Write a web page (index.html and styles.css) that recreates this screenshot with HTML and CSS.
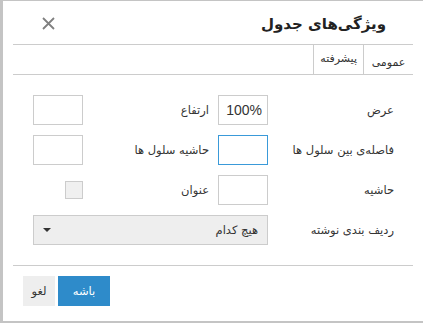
FILE: index.html
```html
<!DOCTYPE html>
<html lang="fa" dir="rtl">
  <head>
    <meta charset="UTF-8" />
    <title>ویژگی‌های جدول</title>
    <link rel="stylesheet" href="styles.css">
  </head>
  <body>
    <div class="dialog">
      <div class="head">
        <h1 class="title">ویژگی‌های جدول</h1>
        <span class="close">
          <svg width="13" height="13" viewBox="0 0 13 13">
            <path d="M1 1L12 12M12 1L1 12" stroke="#808080" stroke-width="1.8" />
          </svg>
        </span>
      </div>

      <div class="tabs">
        <span class="tab active">عمومی</span>
        <span class="tab">پیشرفته</span>
      </div>

      <div class="form">
        <label class="lbl">عرض</label>
        <input class="field" type="text" value="100%" />
        <label class="lbl lbl2">ارتفاع</label>
        <input class="field" type="text" />

        <label class="lbl">فاصله‌ی بین سلول ها</label>
        <input class="field focus" type="text" />
        <label class="lbl lbl2">حاشیه سلول ها</label>
        <input class="field" type="text" />

        <label class="lbl">حاشیه</label>
        <input class="field" type="text" />
        <label class="lbl lbl2">عنوان</label>
        <span class="check"></span>

        <label class="lbl">ردیف بندی نوشته</label>
        <div class="select">
          <span>هیچ کدام</span>
          <span class="arrow"></span>
        </div>
      </div>

      <div class="foot">
        <button class="btn ok">باشه</button>
        <button class="btn cancel">لغو</button>
      </div>
    </div>
  </body>
</html>
```

FILE: styles.css
```css
* {
  margin: 0;
  padding: 0;
  box-sizing: border-box;
}

body {
  font-family: "DejaVu Sans", "Noto Sans", sans-serif;
  font-size: 11.5px;
  color: #333;
  background: #fff;
}

.dialog {
  width: 423px;
  height: 323px;
  border-left: 3px solid #c4c4c4;
  border-top: 1px solid #c4c4c4;
  border-bottom: 2px solid #c4c4c4;
  padding: 0 10px;
}

.head {
  height: 44px;
  border-bottom: 1px solid #ccc;
  display: flex;
  align-items: center;
  justify-content: space-between;
  padding: 2px 27px 0 29px;
}

.title {
  font-size: 15px;
  font-weight: bold;
  color: #222;
}

.close {
  display: flex;
}

.tabs {
  display: flex;
  height: 30px;
  border-bottom: 1px solid #ccc;
}

.tab {
  padding: 0 6px;
  line-height: 28px;
  border-left: 1px solid #ccc;
  font-size: 11px;
}

.tab.active {
  width: 50px;
  text-align: center;
  padding-top: 4px;
}

.form {
  display: grid;
  grid-template-columns: 126px 50px 135px 50px;
  grid-auto-rows: 30px;
  row-gap: 10px;
  padding: 20px 19px 20px 0;
}

.lbl {
  align-self: center;
}

.lbl2 {
  padding-right: 9px;
}

.field {
  width: 50px;
  height: 30px;
  border: 1px solid #ccc;
  font-family: "Liberation Sans", sans-serif;
  font-size: 14px;
  color: #333;
  padding: 0 5px;
  text-align: right;
  outline: none;
}

.field.focus {
  border-color: #3a9ad9;
}

.check {
  width: 18px;
  height: 18px;
  border: 1px solid #ccc;
  background: #f0f0f0;
  align-self: center;
}

.select {
  grid-column: 2 / 5;
  height: 30px;
  border: 1px solid #ccc;
  background: #eee;
  display: flex;
  align-items: center;
  justify-content: space-between;
  padding: 0 9px 0 9px;
}

.arrow {
  width: 0;
  height: 0;
  border-left: 4px solid transparent;
  border-right: 4px solid transparent;
  border-top: 4px solid #333;
}

.foot {
  border-top: 1px solid #ccc;
  padding: 10px 10px 0;
  display: flex;
  justify-content: flex-end;
  gap: 3px;
}

.btn {
  height: 30px;
  border: none;
  font-family: "DejaVu Sans", sans-serif;
  font-size: 11.5px;
}

.ok {
  width: 52px;
  background: #2e8bca;
  color: #fff;
}

.cancel {
  width: 32px;
  background: #eee;
  color: #333;
}
```
